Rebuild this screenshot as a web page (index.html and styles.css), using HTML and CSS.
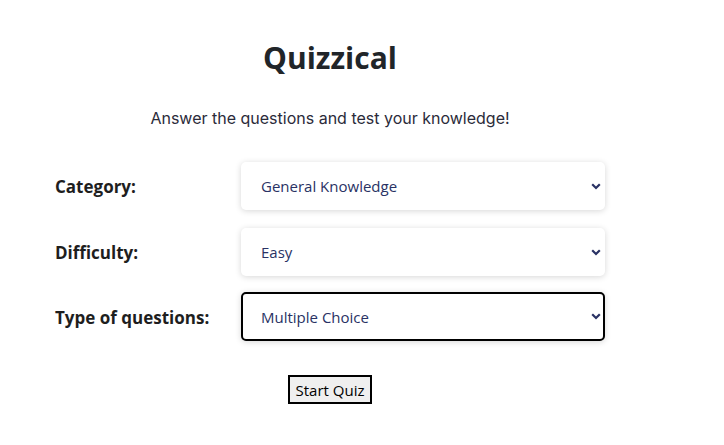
FILE: index.html
```html
<!DOCTYPE html>
<html lang="en">
<head>
<meta charset="utf-8">
<title>Quizzical</title>
<link rel="stylesheet" href="styles.css">
</head>
<body>
<main class="page">
  <h1 class="title">Quizzical</h1>
  <p class="subtitle">Answer the questions and test your knowledge!</p>
  <form class="form">
    <label class="label" for="category">Category:</label>
    <div class="select-wrap">
      <select id="category" class="select">
        <option>General Knowledge</option>
      </select>
      <svg class="chev" width="10" height="7" viewBox="0 0 10 7"><path d="M1.2 1.2 L5 5 L8.8 1.2" fill="none" stroke="#293264" stroke-width="2.2"/></svg>
    </div>
    <label class="label" for="difficulty">Difficulty:</label>
    <div class="select-wrap">
      <select id="difficulty" class="select">
        <option>Easy</option>
      </select>
      <svg class="chev" width="10" height="7" viewBox="0 0 10 7"><path d="M1.2 1.2 L5 5 L8.8 1.2" fill="none" stroke="#293264" stroke-width="2.2"/></svg>
    </div>
    <label class="label" for="type">Type of questions:</label>
    <div class="select-wrap focused-wrap">
      <select id="type" class="select focused">
        <option>Multiple Choice</option>
      </select>
      <svg class="chev" width="10" height="7" viewBox="0 0 10 7"><path d="M1.2 1.2 L5 5 L8.8 1.2" fill="none" stroke="#293264" stroke-width="2.2"/></svg>
    </div>
  </form>
  <div class="actions">
    <button class="start" type="button">Start Quiz</button>
  </div>
</main>
</body>
</html>
```
FILE: styles.css
```css
html, body {
  margin: 0;
  padding: 0;
  background: #ffffff;
}
.page {
  width: 550px;
  margin-left: 55px;
  padding-top: 38px;
  display: flex;
  flex-direction: column;
  align-items: stretch;
}
.title {
  margin: 0;
  text-align: center;
  font-family: "Open Sans", sans-serif;
  font-weight: 700;
  font-size: 30px;
  line-height: 40px;
  color: #212529;
}
.subtitle {
  margin: 28px 0 0 0;
  text-align: center;
  font-family: Inter, sans-serif;
  font-size: 16px;
  line-height: 24px;
  color: #2b2b3a;
}
.form {
  margin-top: 32px;
  display: grid;
  grid-template-columns: 186px 364px;
  row-gap: 18px;
  align-items: center;
}
.label {
  font-family: "Open Sans", sans-serif;
  font-weight: 700;
  font-size: 17px;
  color: #1e1e1e;
}
.select-wrap {
  position: relative;
  height: 48px;
}
.focused-wrap {
  margin-top: -2px;
  height: 49px;
}
.select {
  appearance: none;
  -webkit-appearance: none;
  width: 100%;
  height: 100%;
  box-sizing: border-box;
  border: none;
  border-radius: 5px;
  background: #ffffff;
  box-shadow: 0 1px 6px rgba(0, 0, 0, 0.16);
  padding: 0 0 0 20px;
  font-family: "Open Sans", sans-serif;
  font-size: 15px;
  color: #293264;
  outline: none;
}
.select.focused {
  border: 2px solid #000000;
  padding-left: 18px;
}
.chev {
  position: absolute;
  right: 4px;
  top: 21px;
  pointer-events: none;
}
.actions {
  margin-top: 34px;
  display: flex;
  justify-content: center;
}
.start {
  font-family: "Open Sans", sans-serif;
  font-size: 15px;
  color: #000000;
  background: #efefef;
  border: 2px solid #000000;
  padding: 1px 6px;
  height: 29px;
}
```
